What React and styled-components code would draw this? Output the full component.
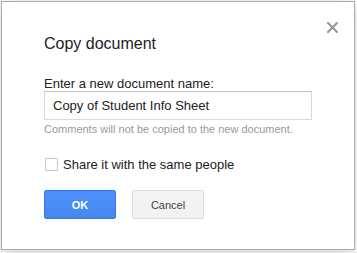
import styled, { createGlobalStyle } from "styled-components";

const GlobalStyle = createGlobalStyle`
  html, body {
    margin: 0;
    padding: 0;
    background: #fff;
  }
  body {
    font-family: "Liberation Sans", Arial, sans-serif;
  }
`;

function CloseIcon() {
  return (
    <svg width="11" height="11" viewBox="0 0 11 11">
      <path
        d="M1 1 L10 10 M10 1 L1 10"
        stroke="#999"
        strokeWidth="2.2"
        strokeLinecap="square"
      />
    </svg>
  );
}

function App() {
  return (
    <Page>
      <GlobalStyle />
      <Dialog>
        <Close aria-label="Close">
          <CloseIcon />
        </Close>
        <Title>Copy document</Title>
        <Label htmlFor="docname">Enter a new document name:</Label>
        <NameInput id="docname" defaultValue="Copy of Student Info Sheet" />
        <Hint>Comments will not be copied to the new document.</Hint>
        <CheckRow>
          <Box />
          <span>Share it with the same people</span>
        </CheckRow>
        <Buttons>
          <Button primary>OK</Button>
          <Button>Cancel</Button>
        </Buttons>
      </Dialog>
    </Page>
  );
}

export default App;

const Page = styled.div`
  width: 357px;
  height: 253px;
  padding: 1px;
  box-sizing: border-box;
`;

const Dialog = styled.div`
  position: relative;
  width: 354px;
  height: 249px;
  box-sizing: border-box;
  border: 1px solid #acacac;
  box-shadow: 0 4px 16px rgba(0, 0, 0, 0.2);
  background: #fff;
  padding: 30px 42px 0 42px;
  display: flex;
  flex-direction: column;
  color: #222;
`;

const Close = styled.button`
  position: absolute;
  top: 19px;
  left: 324px;
  width: 13px;
  height: 13px;
  padding: 1px;
  border: 0;
  background: none;
  display: flex;
  cursor: pointer;
`;

const Title = styled.div`
  font-size: 16px;
  line-height: 24px;
  color: #222;
`;

const Label = styled.label`
  margin-top: 20px;
  font-size: 13px;
  line-height: 15px;
  color: #222;
`;

const NameInput = styled.input`
  width: 268px;
  height: 29px;
  box-sizing: border-box;
  border: 1px solid #d9d9d9;
  border-top-color: #c0c0c0;
  padding: 0 8px;
  font-family: "Liberation Sans", Arial, sans-serif;
  font-size: 13px;
  color: #222;
  outline: none;
`;

const Hint = styled.div`
  margin-top: 3px;
  font-size: 11px;
  line-height: 13px;
  color: #999;
`;

const CheckRow = styled.label`
  margin-top: 21px;
  display: flex;
  align-items: center;
  gap: 5px;
  font-size: 13px;
  line-height: 15px;
  color: #222;
  padding-left: 1px;
`;

const Box = styled.span`
  width: 13px;
  height: 13px;
  box-sizing: border-box;
  border: 1px solid #c6c6c6;
  border-radius: 1px;
  background: #fff;
`;

const Buttons = styled.div`
  margin-top: 18px;
  display: flex;
  gap: 16px;
`;

const Button = styled.button`
  width: 72px;
  height: 29px;
  box-sizing: border-box;
  border-radius: 2px;
  font-family: "Liberation Sans", Arial, sans-serif;
  font-size: 11px;
  font-weight: ${(p) => (p.primary ? "bold" : "normal")};
  color: ${(p) => (p.primary ? "#fff" : "#444")};
  border: 1px solid ${(p) => (p.primary ? "#3079ed" : "#dcdcdc")};
  background: ${(p) =>
    p.primary
      ? "linear-gradient(#4d90fe, #4787ed)"
      : "linear-gradient(#f5f5f5, #f1f1f1)"};
  padding: 0 8px;
  cursor: pointer;
`;
